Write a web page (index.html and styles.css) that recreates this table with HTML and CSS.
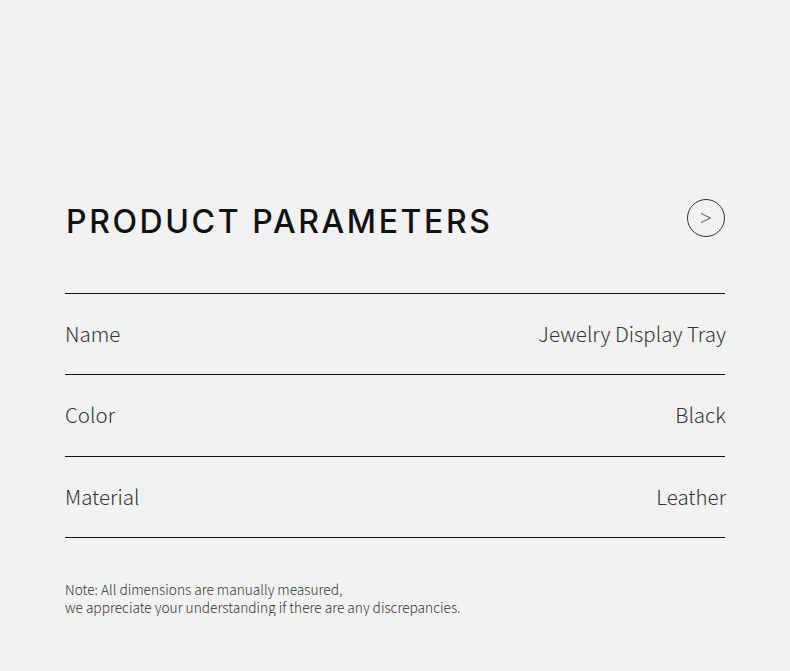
FILE: index.html
```html
<!DOCTYPE html>
<html>
<head>
<meta charset="utf-8">
<link rel="stylesheet" href="styles.css">
</head>
<body>
<div class="page">
  <div class="header">
    <h1 class="title">PRODUCT PARAMETERS</h1>
    <div class="circle">
      <svg width="40" height="40" viewBox="0 0 40 40"><circle cx="20" cy="20" r="18.5" fill="none" stroke="#333" stroke-width="1"/><path d="M15 15.5 L24.5 20 L15 24.5" fill="none" stroke="#555" stroke-width="1"/></svg>
    </div>
  </div>
  <div class="table">
    <div class="row"><span class="label">Name</span><span class="value">Jewelry Display Tray</span></div>
    <div class="row"><span class="label">Color</span><span class="value">Black</span></div>
    <div class="row"><span class="label">Material</span><span class="value">Leather</span></div>
  </div>
  <p class="note">Note: All dimensions are manually measured,<br>we appreciate your understanding if there are any discrepancies.</p>
</div>
</body>
</html>
```
FILE: styles.css
```css
html, body { margin: 0; padding: 0; background: #f2f2f2; }
.page { width: 660px; margin: 0 0 0 65px; padding-top: 198px; font-family: "Noto Sans CJK SC", "Noto Sans", sans-serif; }
.header { display: flex; justify-content: space-between; align-items: flex-start; height: 95px; }
.title { margin: 0; font-family: "Inter", "Lato", sans-serif; font-weight: 500; font-size: 32px; letter-spacing: 2.6px; color: #111; line-height: 48px; padding-left: 1px; white-space: nowrap; }
.circle { width: 40px; height: 40px; margin-right: -1px; }
.table { border-top: 1px solid #111; }
.row { display: flex; justify-content: space-between; align-items: center; height: 80.3px; border-bottom: 1px solid #111; font-size: 20.5px; font-weight: 300; color: #333; }
.label, .value { position: relative; top: -1px; }
.value { margin-right: -1px; }
.note { margin: 42px 0 0 0; font-size: 13.7px; line-height: 18px; color: #333; font-weight: 300; }
```
